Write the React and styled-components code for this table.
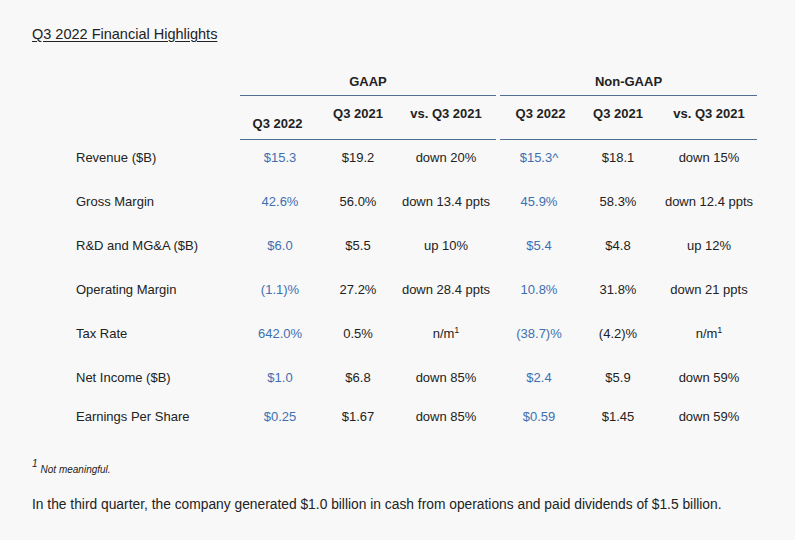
import React from "react";
import styled, { createGlobalStyle } from "styled-components";

const Global = createGlobalStyle`
  html, body { margin: 0; padding: 0; background: #f8f8f8; }
  body { font-family: "Liberation Sans", Arial, sans-serif; color: #222; }
`;

const Page = styled.div`
  width: 795px;
  height: 540px;
  box-sizing: border-box;
  padding: 26px 32px 0 32px;
  background: #f8f8f8;
  overflow: hidden;
`;

const Title = styled.h1`
  margin: 0;
  font-size: 14.5px;
  font-weight: 400;
  line-height: 17px;
  text-decoration: underline;
  text-underline-offset: 2px;
  color: #222;
`;

const Table = styled.div`
  display: grid;
  grid-template-columns: 164px 80px 76px 100px 86px 72px 110px;
  margin: 0 0 0 44px;
  padding-top: 31px;
  font-size: 13px;
  line-height: 15px;
`;

const GroupHead = styled.div`
  grid-column: ${(p) => p.$col};
  font-weight: 700;
  text-align: center;
  padding-bottom: 6px;
  border-bottom: 1.5px solid #4f6f94;
  margin: ${(p) => p.$margin};
`;

const Spacer = styled.div``;

const ColHead = styled.div`
  font-weight: 700;
  text-align: center;
  padding: ${(p) => (p.$low ? "20px 0 8px" : "10px 0 18px")};
  margin-left: ${(p) => p.$shift || 0}px;
`;

const Rule = styled.div`
  grid-column: ${(p) => p.$col};
  border-top: 1.5px solid #4f6f94;
  margin: ${(p) => p.$margin};
`;

const Label = styled.div`
  padding: ${(p) => p.$pad};
`;

const Cell = styled.div`
  text-align: center;
  color: ${(p) => (p.$blue ? "#3e6fb1" : "#222")};
  padding: ${(p) => p.$pad};
  white-space: nowrap;
`;

const Sup = styled.sup`
  font-size: 9px;
  line-height: 0;
  vertical-align: 5px;
`;

const Footnote = styled.div`
  margin-top: 34px;
  font-size: 10px;
  font-style: italic;
  line-height: 12px;
`;

const FootSup = styled.span`
  display: inline-block;
  font-size: 10px;
  vertical-align: 6px;
  margin-right: 3px;
`;

const Para = styled.p`
  margin: 21px 0 0;
  font-size: 13.8px;
  line-height: 15px;
`;

const rows = [
  ["Revenue ($B)", "$15.3", "$19.2", "down 20%", "$15.3^", "$18.1", "down 15%"],
  ["Gross Margin", "42.6%", "56.0%", "down 13.4 ppts", "45.9%", "58.3%", "down 12.4 ppts"],
  ["R&D and MG&A ($B)", "$6.0", "$5.5", "up 10%", "$5.4", "$4.8", "up 12%"],
  ["Operating Margin", "(1.1)%", "27.2%", "down 28.4 ppts", "10.8%", "31.8%", "down 21 ppts"],
  ["Tax Rate", "642.0%", "0.5%", "nm", "(38.7)%", "(4.2)%", "nm"],
  ["Net Income ($B)", "$1.0", "$6.8", "down 85%", "$2.4", "$5.9", "down 59%"],
  ["Earnings Per Share", "$0.25", "$1.67", "down 85%", "$0.59", "$1.45", "down 59%"],
];

const renderVal = (v) =>
  v === "nm" ? (
    <>
      n/m<Sup>1</Sup>
    </>
  ) : (
    v
  );

export default function App() {
  return (
    <Page>
      <Global />
      <Title>Q3 2022 Financial Highlights</Title>
      <Table>
        <Spacer />
        <GroupHead $col="2 / span 3" $margin="0">GAAP</GroupHead>
        <GroupHead $col="5 / span 3" $margin="0 7px 0 4px">Non-GAAP</GroupHead>

        <Spacer />
        <ColHead $low $shift={-5}>Q3 2022</ColHead>
        <ColHead>Q3 2021</ColHead>
        <ColHead>vs. Q3 2021</ColHead>
        <ColHead $shift={3}>Q3 2022</ColHead>
        <ColHead>Q3 2021</ColHead>
        <ColHead>vs. Q3 2021</ColHead>

        <Spacer />
        <Rule $col="2 / span 3" $margin="0" />
        <Rule $col="5 / span 3" $margin="0 7px 0 4px" />

        {rows.map((r, i) => {
          const last = i === rows.length - 1;
          const pad = last ? "5px 0 0" : "10px 0 19px";
          return (
            <React.Fragment key={r[0]}>
              <Label $pad={pad}>{r[0]}</Label>
              {r.slice(1).map((v, j) => (
                <Cell key={j} $pad={pad} $blue={j === 0 || j === 3}>
                  {renderVal(v)}
                </Cell>
              ))}
            </React.Fragment>
          );
        })}
      </Table>
      <Footnote>
        <FootSup>1</FootSup>Not meaningful.
      </Footnote>
      <Para>
        In the third quarter, the company generated $1.0 billion in cash from
        operations and paid dividends of $1.5 billion.
      </Para>
    </Page>
  );
}
